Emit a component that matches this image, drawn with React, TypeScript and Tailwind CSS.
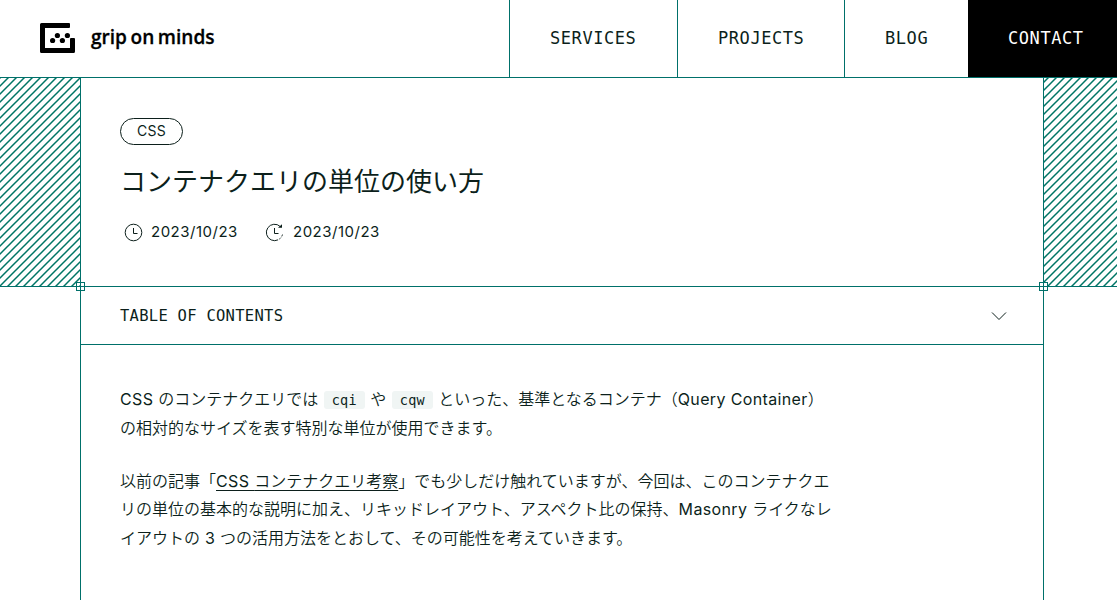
import React from "react";

const jp = "font-['Inter','Noto_Sans_CJK_JP',sans-serif]";
const mono = "font-['DejaVu_Sans_Mono',monospace]";

function Logo() {
  return (
    <a href="#" className="flex h-[75px] items-center pl-10 text-black">
      <svg width="35" height="30" viewBox="0 0 35 30" fill="currentColor">
        <path d="M1.500 0H29Q30 0 30 1V4Q30 5 29 5H5V25H30V16Q30 15 31 15H34Q35 15 35 16V28.500Q35 30 33.500 30H1.500Q0 30 0 28.500V1.500Q0 0 1.500 0Z" />
        <circle cx="12.600" cy="17.500" r="2.600" />
        <circle cx="17.400" cy="12.500" r="2.600" />
        <circle cx="22.400" cy="17.500" r="2.600" />
        <circle cx="27.400" cy="12.500" r="2.600" />
      </svg>
      <span className="mb-1 ml-4 origin-left scale-x-[0.93] whitespace-nowrap font-['Open_Sans',sans-serif] text-[20.500px] leading-[26px] font-semibold tracking-[0px] [-webkit-text-stroke:0.3px_#000] [word-spacing:-1.500px]">
        grip on minds
      </span>
    </a>
  );
}

function Header() {
  const cell = "flex items-center border-l border-[#00706a] px-10";
  return (
    <header className="flex h-[78px] justify-between border-b border-[#00706a]">
      <Logo />
      <nav className={`flex text-[17px] leading-6 tracking-[0.565px] text-[#0c1f1b] ${mono}`}>
        <a href="#" className={`w-[168px] pb-[2px] ${cell}`}>SERVICES</a>
        <a href="#" className={`w-[167px] pb-[2px] ${cell}`}>PROJECTS</a>
        <a href="#" className={`w-[124px] pb-[2px] ${cell}`}>BLOG</a>
        <a href="#" className="flex w-[149px] items-center bg-black pb-[2px] pl-10 text-white">CONTACT</a>
      </nav>
    </header>
  );
}

function Hatch({ id, shift }: { id: string; shift: number }) {
  return (
    <svg className="h-full w-full" aria-hidden="true">
      <defs>
        <pattern id={id} width="8" height="8" patternUnits="userSpaceOnUse" patternTransform={`translate(${shift} 0)`}>
          <path d="M-2 2L2 -2M-2 10L10 -2M6 10L10 6" stroke="#007565" strokeWidth="1.5" />
        </pattern>
      </defs>
      <rect width="100%" height="100%" fill={`url(#${id})`} />
    </svg>
  );
}

function Clock({ refresh = false }: { refresh?: boolean }) {
  return (
    <svg width="19" height="19" viewBox="0 0 19 19" fill="none" stroke="#0c1f1b" strokeWidth="1">
      {refresh ? (
        <>
          <path d="M15.300 3.600A8.200 8.200 0 1 0 17.500 11.500" strokeDasharray="35.500 1.500 2 1.500 2 1.500" />
          <path d="M13 4.800H17V1.300Z" fill="#0c1f1b" stroke="none" />
        </>
      ) : (
        <circle cx="9.500" cy="9.500" r="8.300" />
      )}
      <path d="M9.500 5V10.500H13.500" />
    </svg>
  );
}

function Corner({ side }: { side: string }) {
  return <span className={`absolute top-[204px] z-10 size-[9px] border border-[#00706a] ${side}`} />;
}

function Code({ children }: { children: React.ReactNode }) {
  return (
    <code className={`mx-[5.500px] inline-block h-[18px] w-[41px] rounded-[3px] bg-[#f0f5f4] pl-2 text-[13.500px] leading-[18px] tracking-[0.3px] ${mono}`}>
      {children}
    </code>
  );
}

function Latin({ children }: { children: React.ReactNode }) {
  return <span className="font-normal tracking-[0.36px]">{children}</span>;
}

export default function App() {
  return (
    <div className={`h-[600px] w-[1117px] overflow-hidden bg-white text-[#0c1f1b] ${jp}`}>
      <Header />
      <main className="relative flex h-[522px]">
        <div className="h-[209px] w-20 border-b border-[#00706a]">
          <Hatch id="hatch-left" shift={0} />
        </div>
        <Corner side="left-[76px]" />
        <Corner side="left-[1039px]" />
        <article className="w-[964px] border-x border-[#00706a]">
          <div className="flex h-[209px] flex-col items-start border-b border-[#00706a] pt-10 pl-[39px]">
            <span className="flex h-[27px] w-[63px] items-center justify-center rounded-full border border-[#0c1f1b] pb-[2px] text-[14px] font-normal tracking-[0.2px]">
              CSS
            </span>
            <h1 className="mt-[17px] text-[26px] leading-10 font-normal">コンテナクエリの単位の使い方</h1>
            <div className="mt-[19px] ml-1 flex items-center text-[15px] leading-[22px] font-normal tracking-[0.5px]">
              <Clock />
              <time className="ml-2 w-[87px]">2023/10/23</time>
              <span className="ml-[27px] flex"><Clock refresh /></span>
              <time className="ml-[9px]">2023/10/23</time>
            </div>
          </div>
          <button className={`flex h-[58px] w-full items-center justify-between border-b border-[#00706a] pr-[36px] pl-[39px] text-[15.500px] tracking-[0.27px] ${mono}`}>
            <span className="pt-[2px]">TABLE OF CONTENTS</span>
            <svg width="16" height="10" viewBox="0 0 16 10" fill="none" stroke="#0c1f1b">
              <path d="M1 1.500L8 8.500L15 1.500" />
            </svg>
          </button>
          <div className="flex flex-col gap-6 pt-10 pl-[39px] text-[16px] leading-[28.800px] font-[350] whitespace-nowrap">
            <p>
              <Latin>CSS </Latin>のコンテナクエリでは<Code>cqi</Code>や<Code>cqw</Code>といった、基準となるコンテナ（<Latin>Query Container</Latin>）
              <br />
              の相対的なサイズを表す特別な単位が使用できます。
            </p>
            <p>
              以前の記事「<a href="#" className="underline decoration-1 underline-offset-[3px] [text-decoration-skip-ink:none]"><Latin>CSS </Latin>コンテナクエリ考察</a>」でも少しだけ触れていますが、今回は、このコンテナクエ
              <br />
              リの単位の基本的な説明に加え、リキッドレイアウト、アスペクト比の保持、<Latin>Masonry </Latin>ライクなレ
              <br />
              イアウトの<Latin> 3 </Latin>つの活用方法をとおして、その可能性を考えていきます。
            </p>
          </div>
        </article>
        <div className="h-[209px] w-[73px] border-b border-[#00706a]">
          <Hatch id="hatch-right" shift={4} />
        </div>
      </main>
    </div>
  );
}
